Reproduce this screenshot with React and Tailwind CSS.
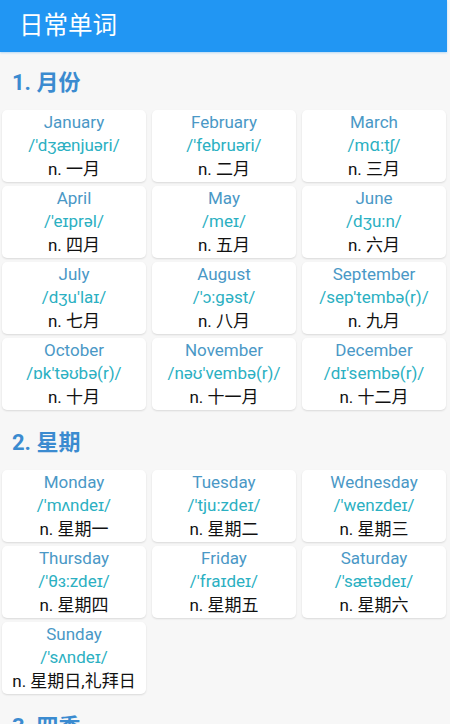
import React from "react";

const months = [
  ["January", "/'dʒænjuəri/", "n. 一月"],
  ["February", "/'februəri/", "n. 二月"],
  ["March", "/mɑ:tʃ/", "n. 三月"],
  ["April", "/'eɪprəl/", "n. 四月"],
  ["May", "/meɪ/", "n. 五月"],
  ["June", "/dʒu:n/", "n. 六月"],
  ["July", "/dʒu'laɪ/", "n. 七月"],
  ["August", "/'ɔ:gəst/", "n. 八月"],
  ["September", "/sep'tembə(r)/", "n. 九月"],
  ["October", "/ɒk'təʊbə(r)/", "n. 十月"],
  ["November", "/nəʊ'vembə(r)/", "n. 十一月"],
  ["December", "/dɪ'sembə(r)/", "n. 十二月"],
];

const weeks = [
  ["Monday", "/'mʌndeɪ/", "n. 星期一"],
  ["Tuesday", "/'tju:zdeɪ/", "n. 星期二"],
  ["Wednesday", "/'wenzdeɪ/", "n. 星期三"],
  ["Thursday", "/'θɜ:zdeɪ/", "n. 星期四"],
  ["Friday", "/'fraɪdeɪ/", "n. 星期五"],
  ["Saturday", "/'sætədeɪ/", "n. 星期六"],
  ["Sunday", "/'sʌndeɪ/", "n. 星期日,礼拜日"],
];

function Card({ w }) {
  return (
    <div className="h-[72px] bg-white rounded-[5px] shadow-[0_1px_2px_rgba(0,0,0,0.12)] flex flex-col items-center justify-center text-[17px] leading-[23.5px] whitespace-nowrap">
      <div className="text-[#4a98c6]">{w[0]}</div>
      <div className="text-[#2bb0c2]">{w[1]}</div>
      <div className="text-[#111]">{w[2]}</div>
    </div>
  );
}

function Title({ children }) {
  return (
    <div className="h-[58px] flex items-center pl-[12px] pt-[2px] text-[22px] font-bold text-[#3b8bd0]">
      {children}
    </div>
  );
}

function Section({ title, words }) {
  return (
    <div>
      <Title>{title}</Title>
      <div className="grid grid-cols-3 gap-x-[6px] gap-y-[4px] pl-[2px] pr-[4px]">
        {words.map((w) => (
          <Card key={w[0]} w={w} />
        ))}
      </div>
    </div>
  );
}

export default function App() {
  return (
    <div
      className="w-[450px] h-[724px] overflow-hidden bg-[#f7f7f7]"
      style={{ fontFamily: 'Roboto, "Noto Sans CJK SC", sans-serif' }}
    >
      <div className="h-[52px] bg-[#2196f3] mr-[3px] flex items-center pl-[19px] text-white text-[24.5px] shadow-[0_1px_2px_rgba(33,150,243,0.3)]">
        日常单词
      </div>
      <Section title="1. 月份" words={months} />
      <div className="h-[2px]" />
      <Section title="2. 星期" words={weeks} />
      <div className="h-[2px]" />
      <Title>3. 四季</Title>
    </div>
  );
}
